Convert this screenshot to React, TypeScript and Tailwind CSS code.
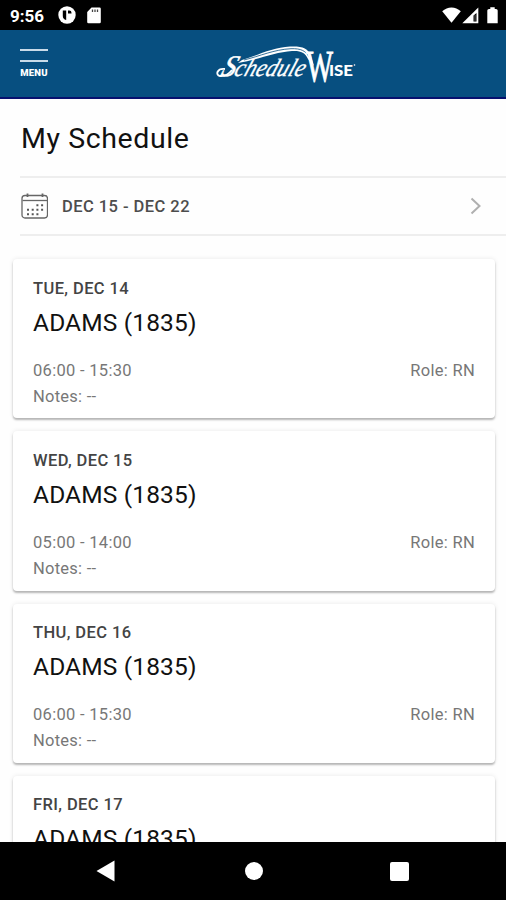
import React from 'react';

interface Shift {
  date: string;
  unit: string;
  time: string;
  role: string;
  notes: string;
}

const shifts: Shift[] = [
  { date: 'TUE, DEC 14', unit: 'ADAMS (1835)', time: '06:00 - 15:30', role: 'RN', notes: '--' },
  { date: 'WED, DEC 15', unit: 'ADAMS (1835)', time: '05:00 - 14:00', role: 'RN', notes: '--' },
  { date: 'THU, DEC 16', unit: 'ADAMS (1835)', time: '06:00 - 15:30', role: 'RN', notes: '--' },
  { date: 'FRI, DEC 17', unit: 'ADAMS (1835)', time: '06:00 - 15:30', role: 'RN', notes: '--' },
];

const StatusBar: React.FC = () => (
  <div className="h-[30px] shrink-0 bg-black text-white flex items-center justify-between pl-[10px] pr-[8px]">
    <div className="flex items-center">
      <span className="w-[35px] pt-px text-[17px] leading-[30px] font-bold whitespace-nowrap">9:56</span>
      <svg className="ml-[13px]" width="18" height="18" viewBox="0 0 18 18">
        <circle cx="9" cy="9" r="8.7" fill="#fff" />
        <path d="M4.800 4.600h3.400v9.500C5.900 13.500 4.800 12 4.800 10Z" fill="#000" />
        <path d="M10 4.600h1.300a2.200 2.200 0 0 1 2.200 2.200v.8H10Z" fill="#000" />
      </svg>
      <svg className="ml-[11px]" width="14" height="17" viewBox="0 0 14 17">
        <path d="M4.500 .5H12.500A1.300 1.300 0 0 1 13.800 1.800V15A1.300 1.300 0 0 1 12.500 16.300H1.500A1.300 1.300 0 0 1 .2 15V5Z" fill="#fff" />
        <path d="M5.500 2.500v2.500M8 2.500v2.500M10.500 2.500v2.500" stroke="#444" strokeWidth="1.300" />
      </svg>
    </div>
    <div className="flex items-center">
      <svg width="19" height="16" viewBox="0 0 19 16">
        <path d="M.2 4.300C5.500-.8 13.500-.8 18.800 4.300L9.500 15.800Z" fill="#fff" />
      </svg>
      <svg className="ml-[1px]" width="17" height="17" viewBox="0 0 17 17">
        <path d="M16.300 .5V16.300H.3Z" fill="#fff" />
        <path d="M11.500 8.500l3-2.500v8.500h-3Z" fill="#000" />
        <path d="M13 8v6" stroke="#777" strokeWidth=".8" />
      </svg>
      <svg className="ml-[8px]" width="11" height="17" viewBox="0 0 11 17">
        <path d="M3.300 .3h4.400v1.600h1.300a1.700 1.700 0 0 1 1.700 1.700v12.700H.3V3.600A1.700 1.700 0 0 1 2 1.900h1.300Z" fill="#fff" />
      </svg>
    </div>
  </div>
);

const Logo: React.FC = () => (
  <svg width="148" height="46" viewBox="0 0 148 46" fill="#fff">
    <g transform="translate(4 33.500) skewX(-20)" fontFamily="Liberation Serif, serif" fontStyle="italic">
      <text x="4" y="0" fontSize="30" textLength="14" lengthAdjust="spacingAndGlyphs" stroke="#fff" strokeWidth=".5">S</text>
      <text x="17" y="0" fontSize="25" textLength="70" lengthAdjust="spacingAndGlyphs" stroke="#fff" strokeWidth=".3">chedule</text>
    </g>
    <path d="M13 27C5 26 3 33 8 34C13 34.500 17 32 20 28" fill="none" stroke="#fff" strokeWidth="1.900" />
    <path d="M30 18C44 14 60 5.500 78 4.500C90 4 96 6 99 14L102 24L96 17C93 10 88 8.500 80 9C63 10 45 18 26 21Z" />
    <path d="M32 18C48 14 62 7.600 79 6.700C89 6.300 94 9 97 15" fill="none" stroke="#074f80" strokeWidth=".8" />
    <text x="94" y="39" fontFamily="Liberation Serif, serif" fontWeight="400" fontSize="45" textLength="27" lengthAdjust="spacingAndGlyphs" stroke="#fff" strokeWidth=".9">W</text>
    <text x="117" y="33.500" fontFamily="Lato, sans-serif" fontWeight="900" fontSize="15.500" textLength="24" lengthAdjust="spacingAndGlyphs">ISE</text>
    <circle cx="142.500" cy="23" r=".8" />
  </svg>
);

const Header: React.FC = () => (
  <header className="h-[69px] shrink-0 bg-[#074f80] border-b-2 border-[#07116f] flex items-start text-white">
    <button className="mt-[19px] ml-[20px] w-[28px] flex flex-col items-center">
      <span className="h-[2px] w-full bg-[#c9dbe9]" />
      <span className="mt-[9px] h-[2px] w-full bg-[#c9dbe9]" />
      <span className="mt-[5px] text-[9.500px] leading-[12px] font-black tracking-[0.250px]">MENU</span>
    </button>
    <div className="ml-[164px] mt-[12px]">
      <Logo />
    </div>
  </header>
);

const CalendarIcon: React.FC = () => (
  <svg width="28" height="28" viewBox="0 0 28 28" fill="none" stroke="#666" strokeWidth="1.300">
    <rect x="2" y="3.500" width="25.500" height="22.500" rx="3" />
    <path d="M2.500 8.500h24.500" />
    <path d="M7.500 1.500v3.500M22.500 1.500v3.500" strokeWidth="1.800" />
    <path d="M16.400 13.300h6.800M7 17.800h16.200M7 22.200h11.500" stroke="#555" strokeWidth="2" strokeDasharray="2 2.700" />
  </svg>
);

const ShiftCard: React.FC<{ shift: Shift }> = ({ shift }) => (
  <div className="h-[159.300px] shrink-0 rounded-[4px] bg-white px-[20px] pt-[18.500px] shadow-[0_2px_2px_rgba(0,0,0,0.26),0_0_5px_rgba(0,0,0,0.09)]">
    <div className="text-[16.500px] leading-[22px] font-medium tracking-[0.400px] text-[#444]">{shift.date}</div>
    <div className="mt-[8px] text-[24.500px] leading-[30px] tracking-[0.150px] text-[#111]">{shift.unit}</div>
    <div className="mt-[20px] flex justify-between text-[16.500px] leading-[26px] tracking-[0.300px] text-[#777]">
      <span>{shift.time}</span>
      <span>Role: {shift.role}</span>
    </div>
    <div className="text-[16.500px] leading-[26px] tracking-[0.250px] text-[#777]">Notes: {shift.notes}</div>
  </div>
);

const NavBar: React.FC = () => (
  <nav className="h-[58px] shrink-0 bg-black flex items-center pl-[96px]">
    <svg width="19" height="22" viewBox="0 0 19 22">
      <path d="M18.500 .5v21L.5 11Z" fill="#fff" />
    </svg>
    <span className="ml-[130px] size-[18px] rounded-full bg-white" />
    <span className="ml-[127px] size-[19px] rounded-[2px] bg-white" />
  </nav>
);

const App: React.FC = () => {
  return (
    <div className="w-full h-screen flex flex-col overflow-hidden bg-[#fefefe] font-[Roboto,sans-serif]">
      <StatusBar />
      <Header />
      <main className="flex-1 min-h-0 overflow-hidden flex flex-col">
        <h1 className="mt-[20px] ml-[21px] shrink-0 text-[28.500px] leading-[40px] tracking-[0.600px] text-[#111]">My Schedule</h1>
        <button className="mt-[17px] ml-[20px] h-[60px] shrink-0 flex items-center border-y-2 border-[#eee] pr-[25px] text-left">
          <CalendarIcon />
          <span className="ml-[14px] pt-[2px] flex-1 text-[16.500px] font-medium tracking-[0.450px] text-[#4d4d4d]">DEC 15 - DEC 22</span>
          <svg width="11" height="18" viewBox="0 0 11 18" fill="none" stroke="#b0b0b0" strokeWidth="2">
            <path d="M1.500 1.500L9.500 9L1.500 16.500" />
          </svg>
        </button>
        <div className="mt-[23px] ml-[13px] mr-[11px] flex flex-col gap-[13px]">
          {shifts.map((shift) => (
            <ShiftCard key={shift.date} shift={shift} />
          ))}
        </div>
      </main>
      <NavBar />
    </div>
  );
};

export default App;
